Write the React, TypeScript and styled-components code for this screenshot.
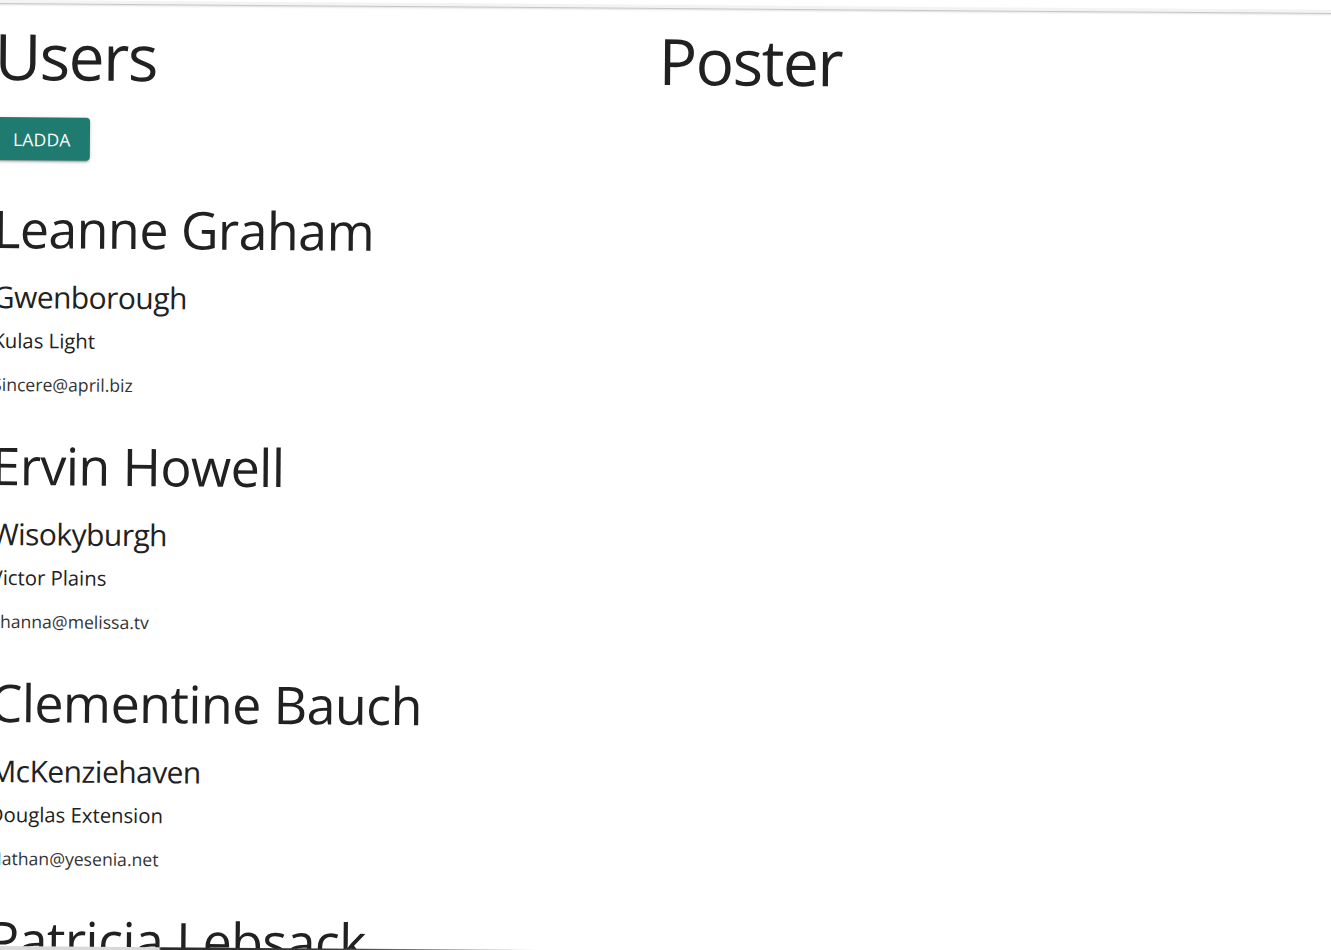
import React from "react";
import styled, { createGlobalStyle } from "styled-components";

const GlobalStyle = createGlobalStyle`
  html, body {
    margin: 0;
    padding: 0;
    background: #ffffff;
    overflow: hidden;
  }
  body {
    font-family: "Open Sans", "Noto Sans", sans-serif;
    color: #212121;
  }
`;

const Page = styled.div`
  position: relative;
  width: 1345px;
  height: 960px;
  transform: rotate(0.43deg);
  transform-origin: 0 0;
  background: #ffffff;
`;

const TopStrip = styled.div`
  height: 3px;
  background: #f3f3f3;
  border-bottom: 1px solid #c6c6c6;
  box-shadow: 0 1px 2px rgba(0, 0, 0, 0.12);
`;

const BottomEdge = styled.div`
  position: absolute;
  left: 0;
  top: 945.5px;
  width: 700px;
  height: 6px;
  background: linear-gradient(
    to right,
    #d9d9d9 0px,
    #d9d9d9 166px,
    #2a2a2a 168px,
    #3a3a3a 330px,
    #8a8a8a 470px,
    #e0e0e0 600px,
    #ffffff 700px
  );
`;

const Columns = styled.div`
  display: grid;
  grid-template-columns: 664px 1fr;
  margin-left: -5px;
`;

const Column = styled.section`
  display: flex;
  flex-direction: column;
  align-items: flex-start;
`;

const Heading = styled.h1`
  margin: 12px 0 0;
  font-size: 64px;
  line-height: 80px;
  font-weight: 400;
  letter-spacing: -1.5px;
  color: #212121;
`;

const LoadButton = styled.button`
  margin-top: 21px;
  height: 43px;
  padding: 0 19px;
  border: none;
  border-radius: 4px;
  background: #1f7b70;
  color: #ffffff;
  font-family: "Open Sans", "Noto Sans", sans-serif;
  font-size: 17.5px;
  font-weight: 400;
  letter-spacing: 0.2px;
  text-transform: uppercase;
  box-shadow: 0 3px 1px -2px rgba(0, 0, 0, 0.2), 0 2px 2px 0 rgba(0, 0, 0, 0.14),
    0 1px 5px 0 rgba(0, 0, 0, 0.12);
  cursor: pointer;
`;

const UserList = styled.div`
  display: flex;
  flex-direction: column;
  margin-top: 37px;
`;

const UserCard = styled.article`
  display: flex;
  flex-direction: column;
  padding-bottom: 37.5px;
`;

const Name = styled.h2`
  margin: 0;
  font-size: 52px;
  line-height: 62px;
  font-weight: 400;
  letter-spacing: -0.6px;
  color: #212121;
  white-space: nowrap;
`;

const City = styled.h3`
  margin: 17.5px 0 0;
  font-size: 30px;
  line-height: 40px;
  font-weight: 400;
  letter-spacing: -0.55px;
  color: #212121;
`;

const Street = styled.p`
  margin: 8px 0 0;
  font-size: 20.3px;
  line-height: 30px;
  color: #212121;
`;

const Email = styled.p`
  margin: 16px 0 0;
  font-size: 17.6px;
  line-height: 26px;
  color: #333333;
`;

const users = [
  { name: "Leanne Graham", city: "Gwenborough", street: "Kulas Light", email: "Sincere@april.biz" },
  { name: "Ervin Howell", city: "Wisokyburgh", street: "Victor Plains", email: "Shanna@melissa.tv" },
  { name: "Clementine Bauch", city: "McKenziehaven", street: "Douglas Extension", email: "Nathan@yesenia.net" },
  { name: "Patricia Lebsack", city: "South Elvis", street: "Hoeger Mall", email: "Julianne.OConner@kory.org" },
];

export default function App() {
  return (
    <>
      <GlobalStyle />
      <Page>
        <TopStrip />
        <Columns>
          <Column>
            <Heading>Users</Heading>
            <LoadButton>Ladda</LoadButton>
            <UserList>
              {users.map((u) => (
                <UserCard key={u.email}>
                  <Name>{u.name}</Name>
                  <City>{u.city}</City>
                  <Street>{u.street}</Street>
                  <Email>{u.email}</Email>
                </UserCard>
              ))}
            </UserList>
          </Column>
          <Column>
            <Heading>Poster</Heading>
          </Column>
        </Columns>
        <BottomEdge />
      </Page>
    </>
  );
}
